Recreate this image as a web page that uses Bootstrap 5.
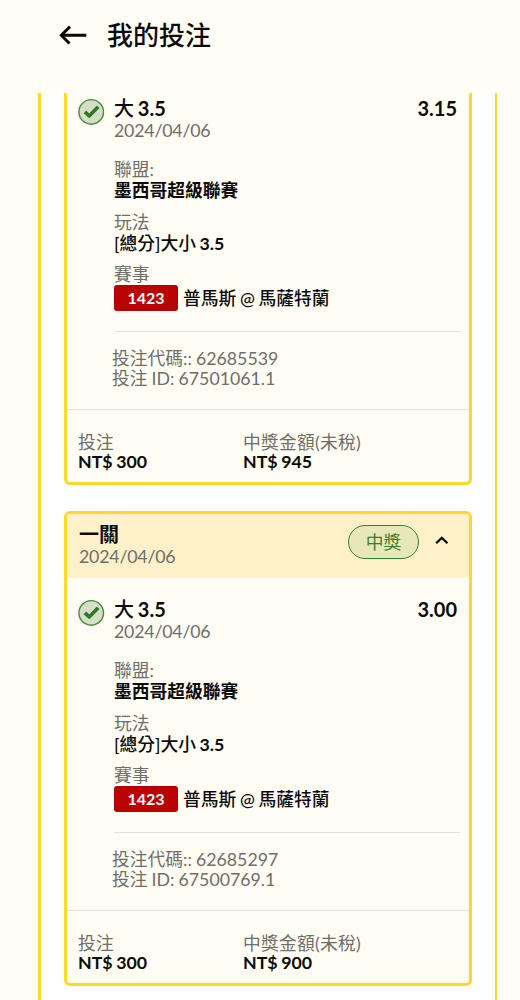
<!DOCTYPE html>
<html lang="zh-Hant">
<head>
<meta charset="utf-8">
<meta name="viewport" content="width=device-width, initial-scale=1">
<title>我的投注</title>
<link href="https://cdn.jsdelivr.net/npm/bootstrap@5.3.0/dist/css/bootstrap.min.css" rel="stylesheet">
<style>
body{background:#fffdf4;color:#0b0b0b;font-family:Lato,"Noto Sans CJK TC",sans-serif;font-size:17.75px;line-height:20px;height:1000px;overflow:hidden}
.top-bar{height:93px;padding:14px 0 0 59px}
.top-bar h1{font-size:26px;line-height:42px;font-weight:500;margin:0 0 0 20px}
.bets-panel{height:907px;margin:0 23px 0 38px;border:solid #ffd829;border-width:0 2px 0 3px;background:#fff;padding:0 23px}
.bet-card{background:#fffdf4;border:3px solid #ffd829;border-radius:6px;margin-bottom:26px;--bs-card-border-width:3px}
.bet-card.scrolled{border-top:0;border-radius:0 0 6px 6px}
.bet-head{height:64px;background:#fef1c9;padding:8px 20px 0 12px;border-radius:3px 3px 0 0}
.muted-text{color:#6f6e6a}
.bet-date{letter-spacing:-.2px;line-height:20px}
.strong-text{font-weight:700;word-spacing:-.8px}
.cjk-mid{font-weight:500}
.won-pill{width:71px;height:34px;border:1px solid #35802b;border-radius:17px;color:#35802b;background:#e7e7b9;margin-top:3px}
.bet-body{padding:19px 12px 0 11px;height:332px}
.scrolled .bet-body{padding-top:3px;height:316px}
.pick{font-size:20px;line-height:24px;font-weight:700;word-spacing:-1px}
.state-icon{width:27px;height:27px;margin-top:2px;flex:none}
.detail{margin-left:9px}
.pair{margin-top:10.5px;line-height:21px}
.pair.first-pair{margin-top:19px}
.game-no{width:64px;height:26px;line-height:26px;background:#b90202;color:#fff;border-radius:3px;font-size:16px;font-weight:700;text-align:center;margin-right:5px}
.rule{height:1px;background:#e3e1dc;margin:20px -3px 0 0}
.codes{margin:17px 0 0 -2px;line-height:19.5px;word-spacing:-.5px}
.bet-foot{border-top:1px solid #e3e1dc;height:73px;padding:23px 0 0 11px;line-height:19.3px}
.bet-foot .muted-text{letter-spacing:.25px}
.bet-foot .stake{width:165px}
</style>
</head>
<body>
<header class="top-bar d-flex align-items-start">
  <svg width="28" height="42" viewBox="0 0 28 42" fill="none" stroke="#090909" stroke-width="2.9"><path d="M27.3 21.2H2.2M11 12.6L2.3 21.2L10.5 29.6"/></svg>
  <h1>我的投注</h1>
</header>
<main class="bets-panel">
  <section class="card bet-card scrolled">
    <div class="bet-body d-flex">
      <svg class="state-icon" viewBox="0 0 27 27"><circle cx="13.2" cy="13.9" r="12.3" fill="#d5dfc8" stroke="#438c3a" stroke-width="1.4"/><path d="M6.9 13.9l4.3 4 9-9.2" fill="none" stroke="#2f7a22" stroke-width="3.6" stroke-linejoin="round"/></svg>
      <div class="flex-grow-1 detail">
        <div class="d-flex justify-content-between pick"><span><span class="cjk-mid">大</span> 3.5</span><span>3.15</span></div>
        <div class="muted-text bet-date">2024/04/06</div>
        <div class="pair first-pair"><div class="muted-text">聯盟:</div><div class="strong-text">墨西哥超級聯賽</div></div>
        <div class="pair"><div class="muted-text">玩法</div><div class="strong-text"><span class="cjk-mid">[總分]大小</span> 3.5</div></div>
        <div class="pair"><div class="muted-text">賽事</div><div class="d-flex align-items-center strong-text"><span class="game-no">1423</span><span class="cjk-mid">普馬斯 @ 馬薩特蘭</span></div></div>
        <div class="rule"></div>
        <div class="codes muted-text"><div>投注代碼:: 62685539</div><div>投注 ID: 67501061.1</div></div>
      </div>
    </div>
    <div class="bet-foot d-flex">
      <div class="stake"><div class="muted-text">投注</div><div class="strong-text">NT$ 300</div></div>
      <div><div class="muted-text">中獎金額(未稅)</div><div class="strong-text">NT$ 945</div></div>
    </div>
  </section>
  <section class="card bet-card">
    <div class="bet-head d-flex justify-content-between">
      <div><div class="pick">一關</div><div class="muted-text bet-date">2024/04/06</div></div>
      <div class="d-flex">
        <div class="won-pill d-flex align-items-center justify-content-center">中獎</div>
        <svg width="14" height="34" viewBox="0 0 14 34" class="ms-3" fill="none" stroke="#090909" stroke-width="2.3"><path d="M1.2 21.3L6.8 15.8L12.4 21.3"/></svg>
      </div>
    </div>
    <div class="bet-body d-flex">
      <svg class="state-icon" viewBox="0 0 27 27"><circle cx="13.2" cy="13.9" r="12.3" fill="#d5dfc8" stroke="#438c3a" stroke-width="1.4"/><path d="M6.9 13.9l4.3 4 9-9.2" fill="none" stroke="#2f7a22" stroke-width="3.6" stroke-linejoin="round"/></svg>
      <div class="flex-grow-1 detail">
        <div class="d-flex justify-content-between pick"><span><span class="cjk-mid">大</span> 3.5</span><span>3.00</span></div>
        <div class="muted-text bet-date">2024/04/06</div>
        <div class="pair first-pair"><div class="muted-text">聯盟:</div><div class="strong-text">墨西哥超級聯賽</div></div>
        <div class="pair"><div class="muted-text">玩法</div><div class="strong-text"><span class="cjk-mid">[總分]大小</span> 3.5</div></div>
        <div class="pair"><div class="muted-text">賽事</div><div class="d-flex align-items-center strong-text"><span class="game-no">1423</span><span class="cjk-mid">普馬斯 @ 馬薩特蘭</span></div></div>
        <div class="rule"></div>
        <div class="codes muted-text"><div>投注代碼:: 62685297</div><div>投注 ID: 67500769.1</div></div>
      </div>
    </div>
    <div class="bet-foot d-flex">
      <div class="stake"><div class="muted-text">投注</div><div class="strong-text">NT$ 300</div></div>
      <div><div class="muted-text">中獎金額(未稅)</div><div class="strong-text">NT$ 900</div></div>
    </div>
  </section>
</main>
<script src="https://cdn.jsdelivr.net/npm/bootstrap@5.3.0/dist/js/bootstrap.bundle.min.js"></script>
</body>
</html>
